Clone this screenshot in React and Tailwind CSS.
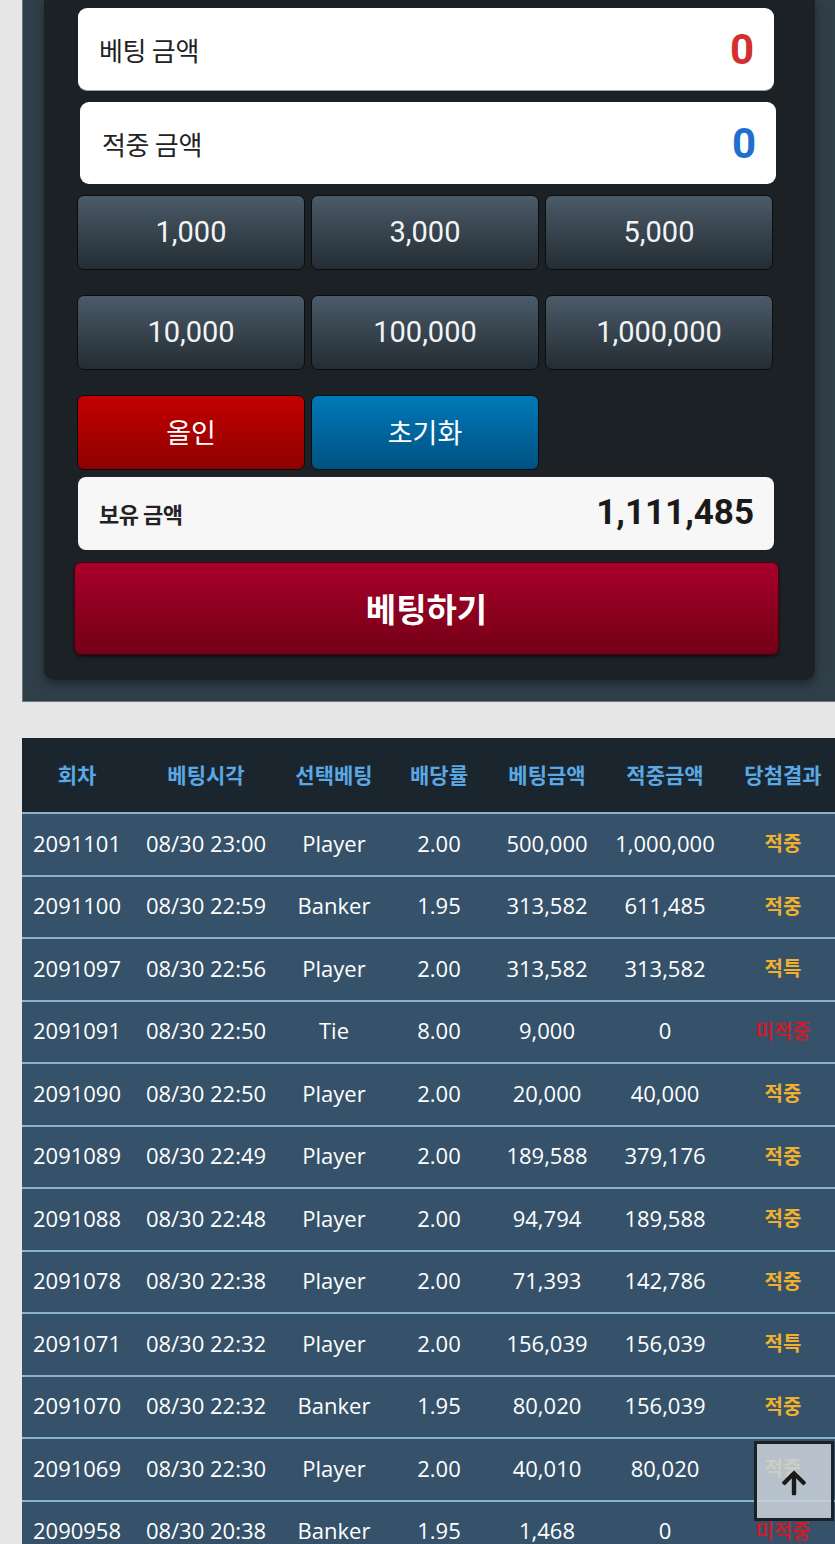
import React from "react";
import { FaArrowUp } from "react-icons/fa";

const rows = [
  ["2091101", "08/30 23:00", "Player", "2.00", "500,000", "1,000,000", "적중"],
  ["2091100", "08/30 22:59", "Banker", "1.95", "313,582", "611,485", "적중"],
  ["2091097", "08/30 22:56", "Player", "2.00", "313,582", "313,582", "적특"],
  ["2091091", "08/30 22:50", "Tie", "8.00", "9,000", "0", "미적중"],
  ["2091090", "08/30 22:50", "Player", "2.00", "20,000", "40,000", "적중"],
  ["2091089", "08/30 22:49", "Player", "2.00", "189,588", "379,176", "적중"],
  ["2091088", "08/30 22:48", "Player", "2.00", "94,794", "189,588", "적중"],
  ["2091078", "08/30 22:38", "Player", "2.00", "71,393", "142,786", "적중"],
  ["2091071", "08/30 22:32", "Player", "2.00", "156,039", "156,039", "적특"],
  ["2091070", "08/30 22:32", "Banker", "1.95", "80,020", "156,039", "적중"],
  ["2091069", "08/30 22:30", "Player", "2.00", "40,010", "80,020", "적중"],
  ["2090958", "08/30 20:38", "Banker", "1.95", "1,468", "0", "미적중"],
];

const headers = ["회차", "베팅시각", "선택베팅", "배당률", "베팅금액", "적중금액", "당첨결과"];

const KR = { fontFamily: '"Noto Sans CJK KR", "Noto Sans", sans-serif' };
const RB = { fontFamily: 'Roboto, "Noto Sans CJK KR", sans-serif' };
const OS = { fontFamily: '"Open Sans", "Noto Sans CJK KR", sans-serif' };

function ChipButton({ children }) {
  return (
    <div
      className="h-[75px] w-[228px] rounded-[7px] border border-[#0b0e10] bg-gradient-to-b from-[#4b5b69] to-[#242d34] flex items-center justify-center text-[29px] text-[#f2f4f6]"
      style={RB}
    >
      {children}
    </div>
  );
}

export default function App() {
  const cols = "grid grid-cols-[110px_148px_108px_102px_114px_122px_114px]";
  return (
    <div className="w-[835px] min-h-[1544px] overflow-hidden bg-[#e6e6e6] relative">
      {/* top panel */}
      <div className="ml-[22px] w-[830px] bg-[#303e48] border-l border-b border-[#6a7882] pb-[21px]">
        <div className="ml-[21px] w-[771px] bg-[#1c2126] rounded-b-[10px] shadow-[0_4px_8px_rgba(0,0,0,0.35)] pl-[34px] pt-[8px] pb-[25px]">
          <div className="w-[696px] h-[82px] rounded-[9px] bg-white flex items-center justify-between pl-[21px] pr-[20px] shadow-[0_1px_0_#9aa3aa]">
            <span className="text-[26px] text-[#222] tracking-[-0.3px]" style={KR}>베팅 금액</span>
            <span className="text-[42px] font-bold text-[#d32f2f]" style={RB}>0</span>
          </div>
          <div className="mt-[12px] ml-[2px] w-[696px] h-[82px] rounded-[9px] bg-white flex items-center justify-between pl-[22px] pr-[20px]">
            <span className="text-[26px] text-[#222] tracking-[-0.3px]" style={KR}>적중 금액</span>
            <span className="text-[42px] font-bold text-[#1e6fd0]" style={RB}>0</span>
          </div>
          <div className="mt-[11px] -ml-[1px] flex gap-[6px]">
            <ChipButton>1,000</ChipButton>
            <ChipButton>3,000</ChipButton>
            <ChipButton>5,000</ChipButton>
          </div>
          <div className="mt-[25px] -ml-[1px] flex gap-[6px]">
            <ChipButton>10,000</ChipButton>
            <ChipButton>100,000</ChipButton>
            <ChipButton>1,000,000</ChipButton>
          </div>
          <div className="mt-[25px] -ml-[1px] flex gap-[6px]">
            <div
              className="h-[75px] w-[228px] rounded-[7px] border border-[#0b0e10] bg-gradient-to-b from-[#c40000] to-[#8e0000] flex items-center justify-center text-[27px] text-white"
              style={KR}
            >
              올인
            </div>
            <div
              className="h-[75px] w-[228px] rounded-[7px] border border-[#0b0e10] bg-gradient-to-b from-[#0079b8] to-[#005283] flex items-center justify-center text-[27px] text-white"
              style={KR}
            >
              초기화
            </div>
          </div>
          <div className="mt-[7px] w-[696px] h-[73px] rounded-[8px] bg-[#f7f7f7] flex items-center justify-between pl-[21px] pr-[20px]">
            <span className="text-[22px] font-bold text-[#222] tracking-[-0.5px]" style={KR}>보유 금액</span>
            <span className="text-[35px] font-bold text-[#1a1a1a]" style={RB}>1,111,485</span>
          </div>
          <div
            className="mt-[12px] -ml-[4px] w-[705px] h-[93px] rounded-[7px] border border-[#4a000e] bg-gradient-to-b from-[#a9002b] to-[#740016] flex items-center justify-center text-[33px] font-bold text-white shadow-[0_2px_3px_rgba(0,0,0,0.5)]"
            style={KR}
          >
            베팅하기
          </div>
        </div>
      </div>

      {/* table */}
      <div className="mt-[36px] ml-[22px] w-[818px]">
        <div className={`${cols} h-[74px] bg-[#1b252e] items-center text-center text-[21px] font-bold text-[#5aa8e4]`} style={KR}>
          {headers.map((h) => (
            <div key={h} className="whitespace-nowrap">{h}</div>
          ))}
        </div>
        {rows.map((r, i) => (
          <div
            key={i}
            className={`${cols} h-[62.5px] bg-[#35526a] border-t-2 border-[#8ab3d2] items-center text-center text-[22px] text-white`}
            style={OS}
          >
            {r.slice(0, 6).map((c, j) => (
              <div key={j} className="whitespace-nowrap -mt-[2px]">{c}</div>
            ))}
            <div
              className={`text-[20px] font-bold -mt-[2px] ${r[6] === "미적중" ? "text-[#c4202c]" : "text-[#efb02f]"}`}
              style={KR}
            >
              {r[6]}
            </div>
          </div>
        ))}
      </div>

      {/* scroll to top */}
      <div className="absolute left-[754px] top-[1441px] w-[80px] h-[80px] border-[3px] border-[#1e2124] bg-[rgba(200,208,216,0.88)] flex items-center justify-center">
        <FaArrowUp className="text-[#1a1a1a] mt-[4px]" size={28} />
      </div>
    </div>
  );
}
